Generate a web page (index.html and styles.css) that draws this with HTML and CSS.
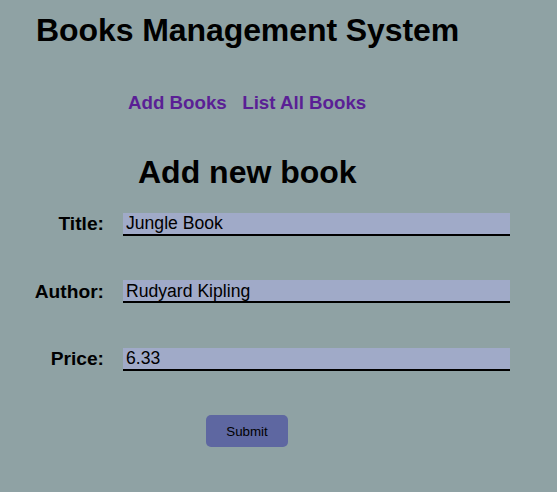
FILE: index.html
```html
<!DOCTYPE html>
<html>
<head>
<meta charset="utf-8">
<title>Books Management System</title>
<link rel="stylesheet" href="styles.css">
</head>
<body>
<header class="site-header">
  <h1 class="site-title">Books Management System</h1>
  <nav class="site-nav">
    <a class="nav-link" href="#">Add Books</a>
    <a class="nav-link" href="#">List All Books</a>
  </nav>
</header>
<main class="content">
  <h2 class="page-title">Add new book</h2>
  <form class="book-form">
    <label class="field-label" for="title">Title:</label>
    <input class="field-input" id="title" type="text" value="Jungle Book">
    <label class="field-label" for="author">Author:</label>
    <input class="field-input" id="author" type="text" value="Rudyard Kipling">
    <label class="field-label" for="price">Price:</label>
    <input class="field-input" id="price" type="text" value="6.33">
    <div class="form-actions">
      <button class="submit-btn" type="submit">Submit</button>
    </div>
  </form>
</main>
</body>
</html>
```

FILE: styles.css
```css
html, body {
  margin: 0;
  padding: 0;
  background: #8fa2a4;
}

body {
  font-family: "Liberation Sans", Arial, sans-serif;
  color: #000;
}

.site-header {
  padding: 12px 0 0 36px;
}

.site-title {
  margin: 0;
  font-size: 32px;
  font-weight: bold;
  line-height: normal;
  letter-spacing: -0.08px;
}

.site-nav {
  display: flex;
  gap: 15.5px;
  margin: 43px 0 0 92px;
  font-size: 18.72px;
  line-height: normal;
}

.nav-link {
  color: #5a1f95;
  font-weight: bold;
  text-decoration: none;
}

.content {
  padding-top: 40.3px;
}

.page-title {
  margin: 0 0 0 138px;
  font-size: 32px;
  font-weight: bold;
  line-height: normal;
}

.book-form {
  display: grid;
  grid-template-columns: 104px 387px;
  column-gap: 19px;
  row-gap: 44.5px;
  align-items: center;
  margin-top: 21.7px;
}

.field-label {
  text-align: right;
  font-size: 19.2px;
  font-weight: bold;
}

.field-input {
  box-sizing: border-box;
  height: 23px;
  width: 387px;
  margin: 0;
  padding: 1px 3px 0;
  border: none;
  border-bottom: 2px solid #000;
  background: #a0aac8;
  font-family: "Liberation Sans", Arial, sans-serif;
  font-size: 17.6px;
  color: #000;
  outline: none;
}

.form-actions {
  grid-column: 1 / -1;
  padding-left: 206px;
}

.submit-btn {
  width: 82px;
  height: 32px;
  padding: 0;
  border: none;
  border-radius: 5px;
  background: #5e67a1;
  font-family: "Liberation Sans", Arial, sans-serif;
  font-size: 13.333px;
  color: #000;
}
```
